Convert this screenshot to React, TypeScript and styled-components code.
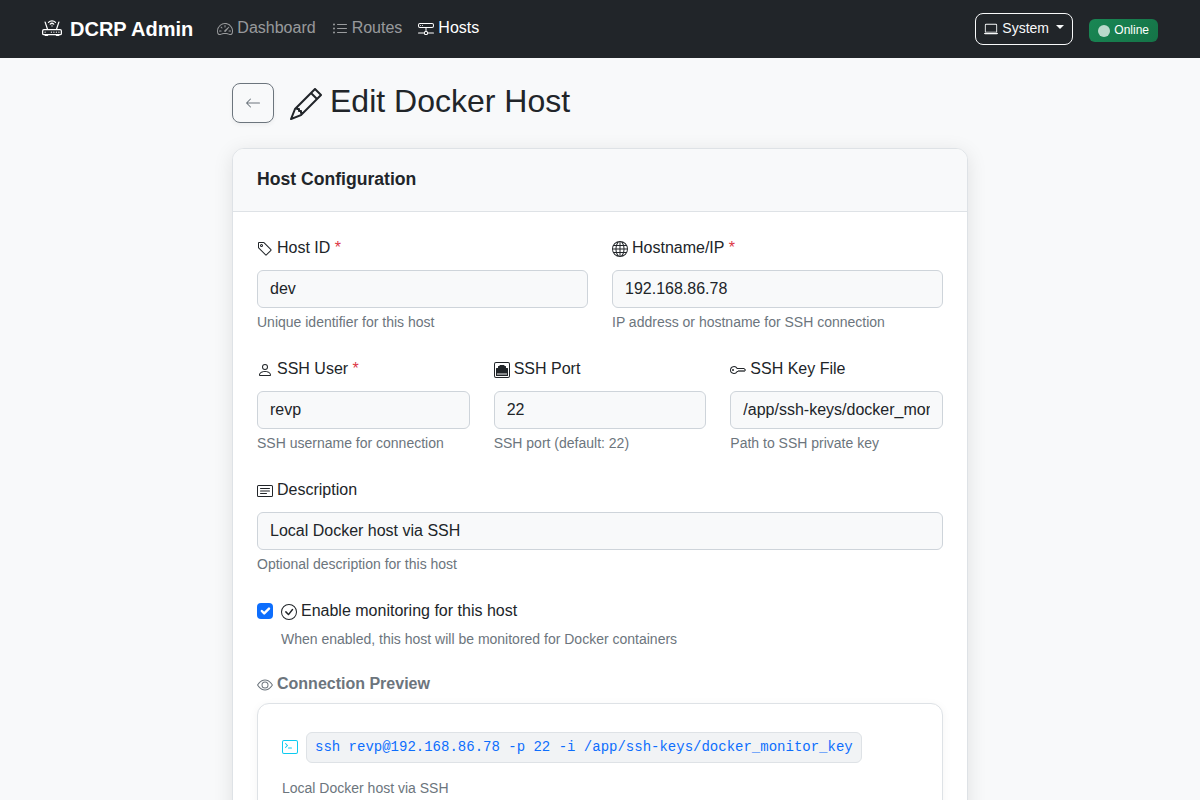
import React from 'react';
import styled, { createGlobalStyle } from 'styled-components';
import {
  BsArrowLeft, BsCardText, BsCheckCircle, BsCircleFill, BsEthernet, BsEye, BsGlobe,
  BsHddNetwork, BsKey, BsLaptop, BsListUl, BsPencil, BsPerson, BsRouter,
  BsSpeedometer2, BsTag, BsTerminal,
} from 'react-icons/bs';

const GlobalStyle = createGlobalStyle`
  *, *::before, *::after { box-sizing: border-box; }
  html { height: 100%; overflow: hidden; }
  body {
    margin: 0;
    height: 800px;
    overflow: hidden;
    background: #f8f9fa;
    color: #212529;
    font: 400 16px/1.5 "Liberation Sans", Arial, sans-serif;
  }
  svg { vertical-align: -0.125em; }
`;

const Navbar = styled.nav`
  height: 58px;
  background: #212529;
`;

const NavInner = styled.div`
  width: 1140px;
  height: 100%;
  margin: 0 auto;
  padding: 0 12px;
  display: flex;
  align-items: center;
`;

const Brand = styled.a`
  display: flex;
  align-items: center;
  gap: 8px;
  margin-right: 16px;
  color: #fff;
  font-size: 20px;
  font-weight: 700;
  line-height: 30px;
`;

const NavLink = styled.a<{ $active?: boolean }>`
  padding: 8px;
  margin-top: -2px;
  color: ${(p) => (p.$active ? '#fff' : 'rgba(255, 255, 255, 0.55)')};
  svg { margin-right: 4px; vertical-align: -4px; }
`;

const NavEnd = styled.div`
  display: flex;
  align-items: center;
  gap: 16px;
  margin-left: auto;
`;

const SystemButton = styled.button`
  width: 98px;
  height: 32px;
  padding: 0 8px 2px;
  border: 1px solid #f8f9fa;
  border-radius: 8px;
  background: transparent;
  color: #f8f9fa;
  font: 400 14px/21px "Liberation Sans", Arial, sans-serif;
  white-space: nowrap;
  text-align: left;
  svg { margin-right: 4px; vertical-align: -3.5px; }
  &::after {
    content: "";
    display: inline-block;
    margin-left: 6.5px;
    vertical-align: 3.57px;
    border-top: 4.2px solid;
    border-right: 4.2px solid transparent;
    border-left: 4.2px solid transparent;
  }
`;

const StatusBadge = styled.span`
  height: 23px;
  margin-top: 2px;
  padding: 0 9px;
  border-radius: 6px;
  background: linear-gradient(135deg, #198754, #157347);
  color: #fff;
  font-size: 12px;
  line-height: 22px;
  svg { margin-right: 4px; opacity: 0.7; vertical-align: -3px; }
`;

const Main = styled.main`
  width: 736px;
  margin: 0 auto;
  padding-top: 25px;
`;

const TitleRow = styled.header`
  display: flex;
  height: 65px;
`;

const BackButton = styled.button`
  width: 42px;
  height: 40px;
  margin-right: 16px;
  padding: 2px 0 0;
  border: 1px solid #6c757d;
  border-radius: 8px;
  background: transparent;
  color: #6c757d;
  font-size: 16px;
  box-shadow: 0 2px 4px rgba(0, 0, 0, 0.05);
`;

const Title = styled.h1`
  margin: -1px 0 0;
  font-size: 32px;
  font-weight: 400;
  line-height: 38px;
  height: 38px;
  svg { margin-right: 8px; vertical-align: -8px; }
`;

const Card = styled.section`
  border: 1px solid #dee2e6;
  border-radius: 12px;
  background: #fff;
  box-shadow: 0 4px 20px rgba(0, 0, 0, 0.1);
`;

const CardHeader = styled.div`
  height: 63px;
  padding: 19px 24px 0;
  border-bottom: 1px solid #dee2e6;
  border-radius: 11px 11px 0 0;
  background: #f8f9fa;
`;

const CardTitle = styled.h2`
  margin: 0;
  font-size: 17.6px;
  font-weight: 700;
  line-height: 22px;
`;

const CardBody = styled.form`
  padding: 24px;
`;

const FieldRow = styled.div<{ $columns: number }>`
  display: grid;
  grid-template-columns: repeat(${(p) => p.$columns}, minmax(0, 1fr));
  column-gap: 24px;
  margin-bottom: 24px;
`;

const FieldLabel = styled.label`
  display: block;
  height: 34px;
  line-height: 24px;
  svg { margin-right: 4px; vertical-align: -4px; }
`;

const Required = styled.span`
  color: #dc3545;
`;

const Input = styled.input`
  display: block;
  width: 100%;
  height: 38px;
  padding: 6px 12px;
  border: 1px solid #ced4da;
  border-radius: 6px;
  background: #f8f9fa;
  color: #212529;
  font: 400 16px/24px "Liberation Sans", Arial, sans-serif;
`;

const Help = styled.div`
  margin-top: 4px;
  color: #6c757d;
  font-size: 14px;
  line-height: 21px;
`;

const CheckRow = styled.div`
  display: flex;
  gap: 8px;
  margin-bottom: 24px;
`;

const CheckMark = styled.span`
  flex: none;
  width: 16px;
  height: 16px;
  margin-top: 4px;
  border-radius: 4px;
  background: #0d6efd;
  svg { display: block; }
`;

const CheckLabel = styled.label`
  display: block;
  height: 26px;
  line-height: 24px;
  svg { margin-right: 4px; vertical-align: -4px; }
`;

const PreviewHeading = styled.h3`
  height: 19px;
  margin: 0 0 10px;
  color: #6c757d;
  font-size: 16px;
  font-weight: 700;
  line-height: 19px;
  svg { margin-right: 4px; vertical-align: -4px; }
`;

const PreviewCard = styled.div`
  height: 140px;
  padding: 28px 24px;
  border: 1px solid #dee2e6;
  border-radius: 12px;
  background: #fff;
  box-shadow: 0 2px 10px rgba(0, 0, 0, 0.05);
`;

const Command = styled.div`
  display: flex;
  align-items: center;
  gap: 8px;
  margin-bottom: 15px;
  color: #0dcaf0;
  svg { margin-bottom: 1px; }
`;

const Code = styled.code`
  height: 31px;
  padding: 0 8px;
  border: 1px solid #dee2e6;
  border-radius: 6px;
  background: #f1f3f5;
  color: #0d6efd;
  font: 400 14px/29px "Liberation Mono", monospace;
  white-space: nowrap;
`;

type FieldProps = {
  icon: React.ReactNode;
  label: string;
  value: string;
  help: string;
  required?: boolean;
};

const Field = ({ icon, label, value, help, required }: FieldProps) => (
  <div>
    <FieldLabel>
      {icon}{label}{required && <Required> *</Required>}
    </FieldLabel>
    <Input defaultValue={value} />
    <Help>{help}</Help>
  </div>
);

export default function App() {
  return (
    <>
      <GlobalStyle />
      <Navbar>
        <NavInner>
          <Brand><BsRouter />DCRP Admin</Brand>
          <NavLink><BsSpeedometer2 />Dashboard</NavLink>
          <NavLink><BsListUl />Routes</NavLink>
          <NavLink $active><BsHddNetwork />Hosts</NavLink>
          <NavEnd>
            <SystemButton type="button"><BsLaptop />System</SystemButton>
            <StatusBadge><BsCircleFill />Online</StatusBadge>
          </NavEnd>
        </NavInner>
      </Navbar>
      <Main>
        <TitleRow>
          <BackButton type="button" aria-label="Back"><BsArrowLeft /></BackButton>
          <Title><BsPencil />Edit Docker Host</Title>
        </TitleRow>
        <Card>
          <CardHeader><CardTitle>Host Configuration</CardTitle></CardHeader>
          <CardBody>
            <FieldRow $columns={2}>
              <Field icon={<BsTag />} label="Host ID" value="dev" help="Unique identifier for this host" required />
              <Field icon={<BsGlobe />} label="Hostname/IP" value="192.168.86.78" help="IP address or hostname for SSH connection" required />
            </FieldRow>
            <FieldRow $columns={3}>
              <Field icon={<BsPerson />} label="SSH User" value="revp" help="SSH username for connection" required />
              <Field icon={<BsEthernet />} label="SSH Port" value="22" help="SSH port (default: 22)" />
              <Field icon={<BsKey />} label="SSH Key File" value="/app/ssh-keys/docker_monitor_key" help="Path to SSH private key" />
            </FieldRow>
            <FieldRow $columns={1}>
              <Field icon={<BsCardText />} label="Description" value="Local Docker host via SSH" help="Optional description for this host" />
            </FieldRow>
            <CheckRow>
              <CheckMark role="checkbox" aria-checked="true">
                <svg width="16" height="16" viewBox="0 0 20 20" fill="none" stroke="#fff" strokeWidth="3" strokeLinecap="round" strokeLinejoin="round">
                  <path d="m6 10 3 3 6-6" />
                </svg>
              </CheckMark>
              <div>
                <CheckLabel><BsCheckCircle />Enable monitoring for this host</CheckLabel>
                <Help>When enabled, this host will be monitored for Docker containers</Help>
              </div>
            </CheckRow>
            <PreviewHeading><BsEye />Connection Preview</PreviewHeading>
            <PreviewCard>
              <Command>
                <BsTerminal />
                <Code>ssh revp@192.168.86.78 -p 22 -i /app/ssh-keys/docker_monitor_key</Code>
              </Command>
              <Help>Local Docker host via SSH</Help>
            </PreviewCard>
          </CardBody>
        </Card>
      </Main>
    </>
  );
}
